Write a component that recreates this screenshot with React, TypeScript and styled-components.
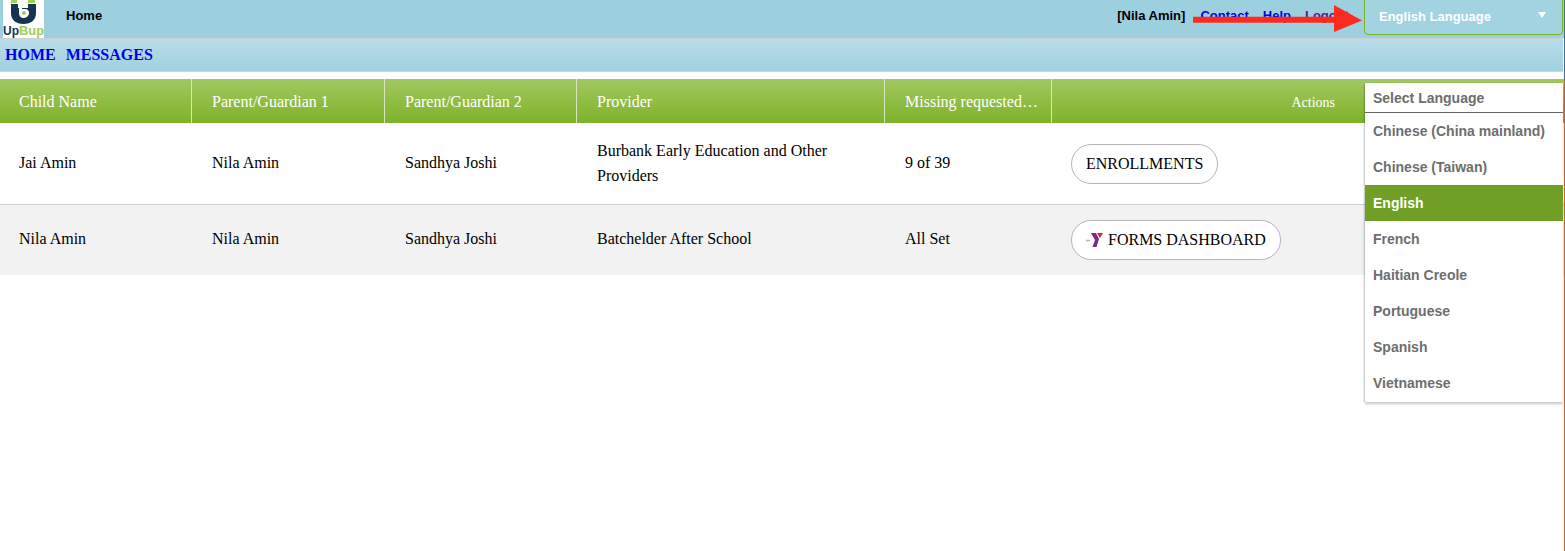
import styled, { createGlobalStyle } from "styled-components";

const GlobalStyle = createGlobalStyle`
  html, body {
    margin: 0;
    padding: 0;
    background: #fff;
  }
  body {
    font-family: "Liberation Serif", serif;
    overflow: hidden;
  }
`;

const Page = styled.div`
  position: relative;
  width: 1565px;
  height: 551px;
  overflow: hidden;
  box-sizing: border-box;
  padding-right: 1px;
  background: #fff;
  &::after {
    content: "";
    position: absolute;
    right: 0;
    top: 79px;
    bottom: 0;
    width: 1px;
    background: #b9682f;
  }
  &::before {
    content: "";
    position: absolute;
    right: 0;
    top: 0;
    height: 79px;
    width: 1px;
    background: #3f6a8a;
  }
`;

const TopBar = styled.div`
  display: flex;
  align-items: flex-start;
  height: 38px;
  background: #9dd0df;
  padding-left: 3px;
  padding-right: 1px;
`;

const Logo = styled.svg`
  width: 41px;
  height: 38px;
  flex: none;
  display: block;
`;

const Crumb = styled.div`
  margin-left: 22px;
  margin-top: 8px;
  font: bold 13px/15px "Liberation Sans", Arial, sans-serif;
  color: #000;
`;

const UserArea = styled.div`
  margin-left: auto;
  display: flex;
  align-items: center;
  height: 15px;
  margin-top: 8px;
  font: bold 13px/15px "Liberation Sans", Arial, sans-serif;
`;

const UserName = styled.span`
  color: #000;
  margin-right: 15px;
`;

const TopLink = styled.a<{ $gap: number; $visited?: boolean }>`
  color: ${(p) => (p.$visited ? "#551a8b" : "#0000ee")};
  text-decoration: underline;
  margin-right: ${(p) => p.$gap}px;
`;

const LangSelect = styled.div`
  flex: none;
  width: 199px;
  height: 36px;
  margin-top: -1px;
  box-sizing: border-box;
  border: 1px solid #7ab32e;
  border-radius: 0 0 4px 4px;
  background: #a2d3e1;
  display: flex;
  align-items: center;
  justify-content: space-between;
  padding: 0 14px;
  font: bold 13px/16px "Liberation Sans", Arial, sans-serif;
  color: #fff;
`;

const Caret = styled.span`
  width: 0;
  height: 0;
  border-left: 4px solid transparent;
  border-right: 4px solid transparent;
  border-top: 6px solid #fff;
  margin-right: 2px;
  margin-top: -4px;
`;

const NavBar = styled.div`
  display: flex;
  gap: 10px;
  align-items: center;
  height: 32px;
  padding-left: 5px;
  margin-right: 1px;
  border-top: 1px solid #ccd0d3;
  border-bottom: 1px solid #ccd8dc;
  background: linear-gradient(#b9dde9, #9fd0df);
`;

const NavLink = styled.a`
  font: bold 16px/20px "Liberation Serif", serif;
  color: #0000ee;
  text-decoration: none;
`;

const Table = styled.div`
  margin-top: 7px;
`;

const HeaderRow = styled.div`
  display: grid;
  grid-template-columns: 192px 193px 192px 308px 167px 1fr;
  height: 44px;
  background: linear-gradient(#a2c860, #7eb229);
  color: #fff;
  font-size: 16px;
`;

const HeaderCell = styled.div<{ $last?: boolean }>`
  display: flex;
  align-items: center;
  padding-left: 20px;
  padding-top: 1px;
  border-right: ${(p) => (p.$last ? "none" : "1px solid #d8e6c0")};
  white-space: nowrap;
  &:first-child {
    padding-left: 19px;
  }
`;

const ActionsLabel = styled(HeaderCell)`
  justify-content: flex-end;
  padding-right: 229px;
  font-size: 14px;
  padding-top: 4px;
`;

const BodyRow = styled.div<{ $shaded?: boolean; $height: number }>`
  --lift: ${(p) => (p.$shaded ? "4px" : "2px")};
  display: grid;
  grid-template-columns: 192px 193px 192px 308px 167px 1fr;
  height: ${(p) => p.$height}px;
  box-sizing: border-box;
  background: ${(p) => (p.$shaded ? "#f2f2f2" : "#fff")};
  border-bottom: ${(p) => (p.$shaded ? "none" : "1px solid #d0d0d0")};
  color: #000;
  font-size: 16px;
  line-height: 25px;
`;

const Cell = styled.div`
  display: flex;
  align-items: center;
  padding: 0 20px var(--lift);
  &:first-child {
    padding-left: 19px;
  }
`;

const ActionCell = styled(Cell)`
  padding: 0 0 0 19px;
`;

const PillButton = styled.button`
  display: inline-flex;
  align-items: center;
  gap: 4px;
  height: 40px;
  padding: 0 14px;
  border: 1px solid #b5b5b5;
  border-radius: 20px;
  background: #fff;
  font: 16px "Liberation Serif", serif;
  color: #000;
`;

const YIcon = styled.svg`
  width: 18px;
  height: 16px;
  flex: none;
`;

const Dropdown = styled.div`
  position: absolute;
  left: 1365px;
  top: 83px;
  width: 198px;
  height: 319px;
  background: #fff;
  box-shadow: 0 2px 3px rgba(0, 0, 0, 0.22), -1px 0 1px rgba(0, 0, 0, 0.12);
  font: bold 14px/16px "Liberation Sans", Arial, sans-serif;
  color: #6e6e6e;
`;

const DropdownTitle = styled.div`
  height: 30px;
  box-sizing: border-box;
  padding: 7px 0 0 8px;
  border-bottom: 1px solid #666;
`;

const Option = styled.div<{ $active?: boolean }>`
  height: 36px;
  display: flex;
  align-items: center;
  padding-left: 8px;
  background: ${(p) => (p.$active ? "#709f26" : "transparent")};
  color: ${(p) => (p.$active ? "#fff" : "#6e6e6e")};
`;

const Arrow = styled.svg`
  position: absolute;
  left: 1190px;
  top: 2px;
  width: 175px;
  height: 34px;
`;

const languages = [
  "Chinese (China mainland)",
  "Chinese (Taiwan)",
  "English",
  "French",
  "Haitian Creole",
  "Portuguese",
  "Spanish",
  "Vietnamese",
];

const App = () => {
  return (
    <Page>
      <GlobalStyle />
      <TopBar>
        <Logo viewBox="0 0 41 38">
          <rect width="41" height="38" fill="#fff" />
          <rect x="8" y="0" width="6" height="3" fill="#a5cc52" />
          <rect x="25" y="0" width="7" height="3" fill="#a5cc52" />
          <path d="M8 4h7v4h10V4h8v9c0 7-5 11-12.500 11S8 20 8 13z" fill="#14344f" />
          <path d="M16 4h3v5h3c3 0 4 2 4 4s-2 5-5 5-5-2-5-5z" fill="#fff" />
          <circle cx="21" cy="13" r="2" fill="#a5cc52" />
          <text x="0" y="35" fontFamily="Liberation Sans" fontWeight="bold" fontSize="12" textLength="16" lengthAdjust="spacingAndGlyphs" fill="#14344f">Up</text>
          <text x="16" y="35" fontFamily="Liberation Sans" fontWeight="bold" fontSize="12" textLength="25" lengthAdjust="spacingAndGlyphs" fill="#a5cc52">Bup</text>
        </Logo>
        <Crumb>Home</Crumb>
        <UserArea>
          <UserName>[Nila Amin]</UserName>
          <TopLink href="#" $gap={14}>Contact</TopLink>
          <TopLink href="#" $gap={14}>Help</TopLink>
          <TopLink href="#" $gap={15} $visited>Logout</TopLink>
        </UserArea>
        <LangSelect>
          English Language
          <Caret />
        </LangSelect>
      </TopBar>
      <NavBar>
        <NavLink href="#">HOME</NavLink>
        <NavLink href="#">MESSAGES</NavLink>
      </NavBar>
      <Table>
        <HeaderRow>
          <HeaderCell>Child Name</HeaderCell>
          <HeaderCell>Parent/Guardian 1</HeaderCell>
          <HeaderCell>Parent/Guardian 2</HeaderCell>
          <HeaderCell>Provider</HeaderCell>
          <HeaderCell>Missing requested…</HeaderCell>
          <ActionsLabel $last>Actions</ActionsLabel>
        </HeaderRow>
        <BodyRow $height={82}>
          <Cell>Jai Amin</Cell>
          <Cell>Nila Amin</Cell>
          <Cell>Sandhya Joshi</Cell>
          <Cell>Burbank Early Education and Other Providers</Cell>
          <Cell>9 of 39</Cell>
          <ActionCell>
            <PillButton>ENROLLMENTS</PillButton>
          </ActionCell>
        </BodyRow>
        <BodyRow $shaded $height={70}>
          <Cell>Nila Amin</Cell>
          <Cell>Nila Amin</Cell>
          <Cell>Sandhya Joshi</Cell>
          <Cell>Batchelder After School</Cell>
          <Cell>All Set</Cell>
          <ActionCell>
            <PillButton>
              <YIcon viewBox="0 0 18 16">
                <path d="M0 8.500h4" stroke="#d9a0c8" strokeWidth="1.500" />
                <path d="M5 1h5l3 6-2.500 8H6.500L9 8z" fill="#7a2a8c" />
                <path d="M11 1h6l-3 5z" fill="#e3202c" />
              </YIcon>
              FORMS DASHBOARD
            </PillButton>
          </ActionCell>
        </BodyRow>
      </Table>
      <Dropdown>
        <DropdownTitle>Select Language</DropdownTitle>
        {languages.map((l) => (
          <Option key={l} $active={l === "English"}>{l}</Option>
        ))}
      </Dropdown>
      <Arrow viewBox="0 0 175 34">
        <path d="M3 14.700h141V3l28 15.500L144 30v-9.300H3z" fill="#fb2c1f" />
      </Arrow>
    </Page>
  );
};

export default App;
